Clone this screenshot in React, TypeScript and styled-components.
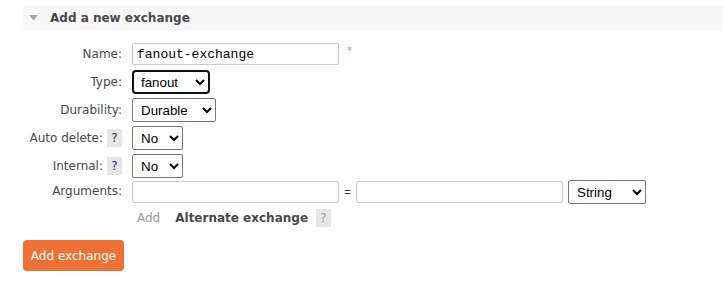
import React from "react";
import styled, { createGlobalStyle } from "styled-components";

const GlobalStyle = createGlobalStyle`
  html, body { margin: 0; padding: 0; background: #fff; }
  body {
    font-family: "DejaVu Sans", Verdana, sans-serif;
    font-size: 12px;
    color: #484848;
  }
`;

const Page = styled.div`
  padding: 5px 0 0 23px;
`;

const SectionHeader = styled.div`
  height: 25px;
  background: #f8f8f8;
  display: flex;
  align-items: center;
  padding-left: 6px;
  gap: 12px;
`;

const SectionTitle = styled.h2`
  margin: 0;
  font-size: 12px;
  font-weight: bold;
  color: #484848;
`;

const Form = styled.div`
  display: flex;
  flex-direction: column;
  margin-top: 10px;
`;

const Row = styled.div<{ $top?: boolean }>`
  display: grid;
  grid-template-columns: 99px 1fr;
  column-gap: 10px;
  align-items: ${(p) => (p.$top ? "start" : "center")};
  min-height: 28px;
`;

const Label = styled.label<{ $pad?: number }>`
  display: flex;
  justify-content: flex-end;
  align-items: center;
  gap: 4px;
  white-space: nowrap;
  padding-top: ${(p) => p.$pad ?? 0}px;
`;

const Field = styled.div`
  display: flex;
  align-items: center;
`;

const Column = styled.div`
  display: flex;
  flex-direction: column;
  gap: 5px;
`;

const TextInput = styled.input<{ $w?: number; $mono?: boolean }>`
  box-sizing: border-box;
  width: ${(p) => p.$w ?? 207}px;
  height: 22px;
  border: 1px solid #c8c8c8;
  border-radius: 2px;
  padding: 0 4px;
  font-family: ${(p) => (p.$mono ? '"Liberation Mono", "Courier New", monospace' : '"Liberation Sans", Arial, sans-serif')};
  font-size: 13px;
  color: #000;
  background: #fff;
  outline: none;
`;

const Required = styled.span`
  color: #f48a9e;
  font-size: 11px;
  margin-left: 8px;
  align-self: flex-start;
  margin-top: 1px;
`;

const Select = styled.select<{ $w: number; $focused?: boolean }>`
  box-sizing: border-box;
  width: ${(p) => p.$w}px;
  height: 24px;
  font-family: "Liberation Sans", Arial, sans-serif;
  font-size: 13.33px;
  color: #000;
  background: #fff;
  border: ${(p) => (p.$focused ? "2px solid #101010" : "1px solid #767676")};
  border-radius: ${(p) => (p.$focused ? 4 : 2)}px;
  padding: 0 ${(p) => (p.$focused ? 3 : 4)}px;
  outline: none;
`;

const Help = styled.span<{ $muted?: boolean }>`
  display: inline-flex;
  align-items: center;
  justify-content: center;
  width: 15px;
  height: 18px;
  background: #e6e6e6;
  color: ${(p) => (p.$muted ? "#a0a0a0" : "#3c2a6a")};
  font-size: 12px;
`;

const Equals = styled.span`
  margin: 0 5px 0 5px;
  font-family: "Liberation Sans", Arial, sans-serif;
  font-size: 12px;
  color: #484848;
`;

const Gap = styled.span`
  width: 5px;
`;

const SubLine = styled.div`
  display: flex;
  align-items: center;
  padding-left: 5px;
`;

const AddLink = styled.span`
  color: #999;
`;

const SubTitle = styled.span`
  font-weight: bold;
  margin-left: 15px;
  margin-right: 8px;
  color: #484848;
`;

const SubmitButton = styled.button`
  margin-top: 13px;
  align-self: flex-start;
  width: 101px;
  height: 31px;
  border: none;
  border-radius: 4px;
  background: #ed7134;
  color: #fff;
  font-family: "DejaVu Sans", Verdana, sans-serif;
  font-size: 12px;
  padding: 0;
`;

const Triangle = () => (
  <svg width="9" height="6" viewBox="0 0 9 6">
    <path d="M0 0 H9 L4.5 5.5 Z" fill="#a8a8a8" />
  </svg>
);

export default function App() {
  return (
    <>
      <GlobalStyle />
      <Page>
        <SectionHeader>
          <Triangle />
          <SectionTitle>Add a new exchange</SectionTitle>
        </SectionHeader>
        <Form>
          <Row>
            <Label>Name:</Label>
            <Field>
              <TextInput $mono defaultValue="fanout-exchange" />
              <Required>*</Required>
            </Field>
          </Row>
          <Row>
            <Label>Type:</Label>
            <Field>
              <Select $w={78} $focused defaultValue="fanout">
                <option>direct</option>
                <option>fanout</option>
                <option>headers</option>
                <option>topic</option>
              </Select>
            </Field>
          </Row>
          <Row>
            <Label>Durability:</Label>
            <Field>
              <Select $w={84} defaultValue="Durable">
                <option>Durable</option>
                <option>Transient</option>
              </Select>
            </Field>
          </Row>
          <Row>
            <Label>
              Auto delete: <Help>?</Help>
            </Label>
            <Field>
              <Select $w={51} defaultValue="No">
                <option>No</option>
                <option>Yes</option>
              </Select>
            </Field>
          </Row>
          <Row>
            <Label>
              Internal: <Help>?</Help>
            </Label>
            <Field>
              <Select $w={51} defaultValue="No">
                <option>No</option>
                <option>Yes</option>
              </Select>
            </Field>
          </Row>
          <Row $top>
            <Label $pad={4}>Arguments:</Label>
            <Column>
              <Field>
                <TextInput />
                <Equals>=</Equals>
                <TextInput />
                <Gap />
                <Select $w={78} defaultValue="String">
                  <option>String</option>
                  <option>Number</option>
                  <option>Boolean</option>
                  <option>List</option>
                </Select>
              </Field>
              <SubLine>
                <AddLink>Add</AddLink>
                <SubTitle>Alternate exchange</SubTitle>
                <Help $muted>?</Help>
              </SubLine>
            </Column>
          </Row>
          <SubmitButton>Add exchange</SubmitButton>
        </Form>
      </Page>
    </>
  );
}
